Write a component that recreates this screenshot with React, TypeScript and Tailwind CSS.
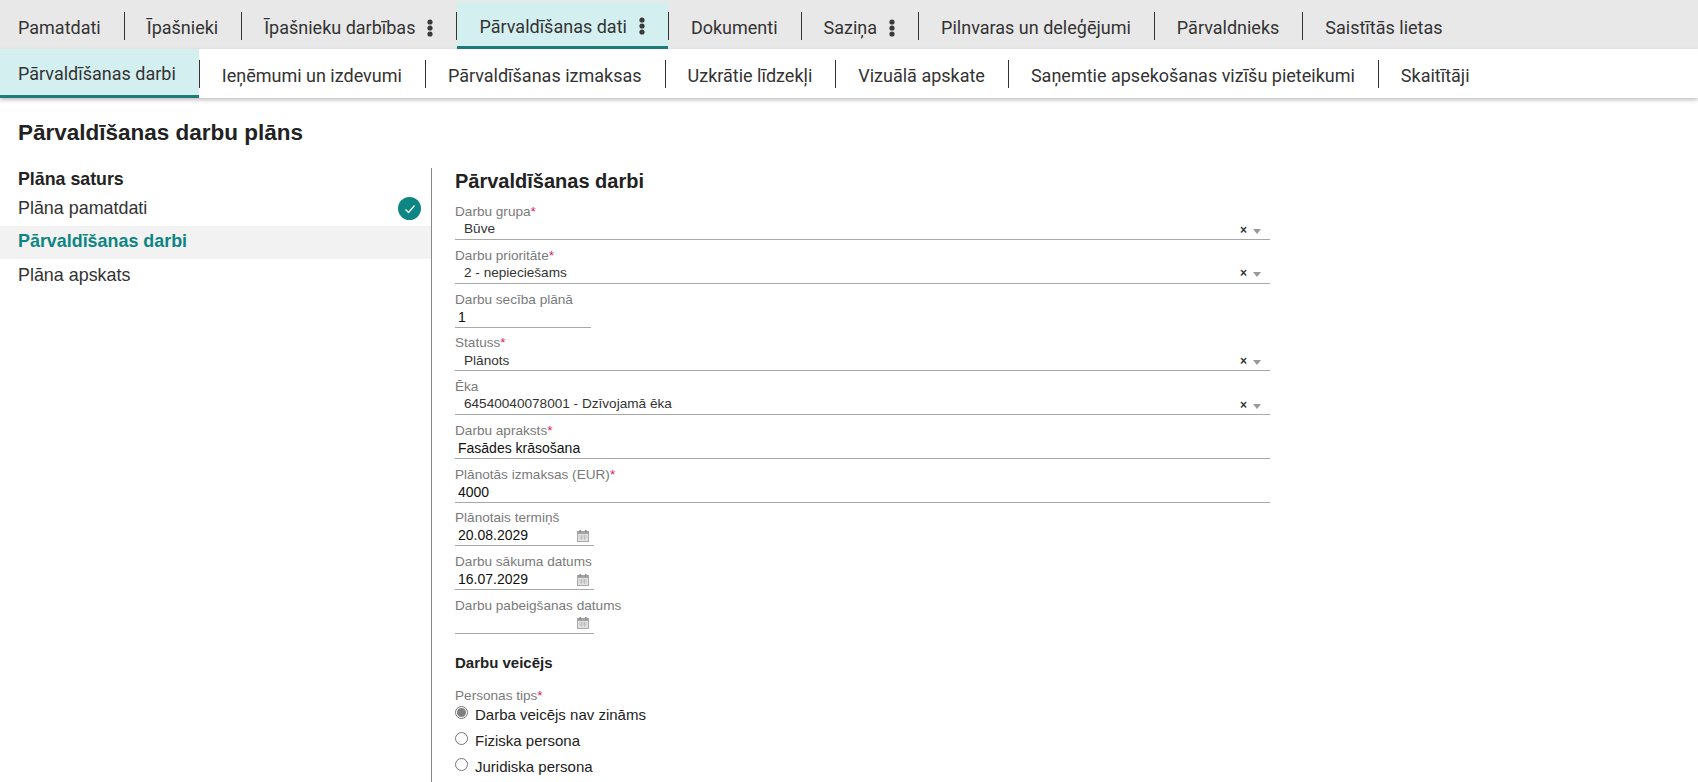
import React from "react";

const topTabs = [
  { label: "Pamatdati" },
  { label: "Īpašnieki" },
  { label: "Īpašnieku darbības", menu: true },
  { label: "Pārvaldīšanas dati", menu: true, active: true },
  { label: "Dokumenti" },
  { label: "Saziņa", menu: true },
  { label: "Pilnvaras un deleģējumi" },
  { label: "Pārvaldnieks" },
  { label: "Saistītās lietas" },
];

const subTabs = [
  { label: "Pārvaldīšanas darbi", active: true },
  { label: "Ieņēmumi un izdevumi" },
  { label: "Pārvaldīšanas izmaksas" },
  { label: "Uzkrātie līdzekļi" },
  { label: "Vizuālā apskate" },
  { label: "Saņemtie apsekošanas vizīšu pieteikumi" },
  { label: "Skaitītāji" },
];

function Kebab() {
  return (
    <svg width="6" height="18" viewBox="0 0 6 18" className="ml-[12px] shrink-0">
      <circle cx="3" cy="3" r="2.6" fill="#3a3a3a" />
      <circle cx="3" cy="9" r="2.6" fill="#3a3a3a" />
      <circle cx="3" cy="15" r="2.6" fill="#3a3a3a" />
    </svg>
  );
}

function CalendarIcon() {
  return (
    <svg width="12" height="12" viewBox="0 0 12 12" className="shrink-0">
      <rect x="0.5" y="1.5" width="11" height="10" fill="#e2e2e2" stroke="#aaa" />
      <rect x="0" y="1" width="12" height="3" fill="#a5a5a5" />
      <rect x="2.5" y="0" width="1.5" height="2.5" fill="#888" />
      <rect x="8" y="0" width="1.5" height="2.5" fill="#888" />
      <path d="M2 6h8M2 8h8M4.5 5v5M7.5 5v5" stroke="#b5b5b5" strokeWidth="0.7" />
    </svg>
  );
}

function TabRow({ items, top }: { items: { label: string; menu?: boolean; active?: boolean }[]; top?: boolean }) {
  return (
    <>
      {items.map((t, i) => (
        <React.Fragment key={t.label}>
          {i > 0 && <div className="my-auto h-[28px] w-px shrink-0 bg-[#333]" />}
          <div
            className={`flex h-full shrink-0 items-center pr-[23px] ${top ? "pt-[4px]" : "pt-[3px]"} ${
              t.active ? "border-b-[3px] border-[#1f7d78] bg-[#d3eff0]" : ""
            } ${i === 0 ? "pl-[18px]" : "pl-[22px]"}`}
          >
            {t.label}
            {t.menu && <Kebab />}
          </div>
        </React.Fragment>
      ))}
    </>
  );
}

function Label({ text, required }: { text: string; required?: boolean }) {
  return (
    <div className="h-[16px] whitespace-nowrap text-[13.6px] leading-[16px] text-[#7a7a7a]">
      {text}
      {required && <span className="text-[#d81b60]">*</span>}
    </div>
  );
}

function SelectField({ label, value, required }: { label: string; value: string; required?: boolean }) {
  return (
    <div className="h-[43.75px] w-[815px] pt-[6px]">
      <Label text={label} required={required} />
      <div className="flex h-[20px] items-center border-b border-[#a8a8a8] pl-[9px] pr-[9px] text-[13.6px] text-[#333]">
        <span className="flex-1">{value}</span>
        <span className="mr-[6px] text-[12px] font-bold leading-none text-[#333]">×</span>
        <span className="mt-[3px] h-0 w-0 border-x-[4px] border-t-[5px] border-x-transparent border-t-[#999]" />
      </div>
    </div>
  );
}

function TextField({ label, value, required, width }: { label: string; value: string; required?: boolean; width: string }) {
  return (
    <div className={`h-[43.75px] pt-[6px] ${width}`}>
      <Label text={label} required={required} />
      <div className="flex h-[20px] items-center border-b border-[#a8a8a8] pl-[3px] text-[14px] text-[#111]">{value}</div>
    </div>
  );
}

function DateField({ label, value }: { label: string; value: string }) {
  return (
    <div className="h-[43.75px] w-[139px] pt-[6px]">
      <Label text={label} />
      <div className="flex h-[20px] items-center justify-between border-b border-[#a8a8a8] pl-[3px] pr-[5px] text-[14px] text-[#111]">
        <span>{value}</span>
        <CalendarIcon />
      </div>
    </div>
  );
}

function Radio({ label, checked }: { label: string; checked?: boolean }) {
  return (
    <div className="flex h-[26px] items-start text-[15px] text-[#222]">
      <span className="mt-[2px] flex h-[13px] w-[13px] shrink-0 items-center justify-center rounded-full border border-[#767676] bg-white">
        {checked && <span className="h-[9px] w-[9px] rounded-full bg-[#808080]" />}
      </span>
      <span className="ml-[7px] mt-[3px] leading-[16px]">{label}</span>
    </div>
  );
}

export default function App() {
  return (
    <div className="flex h-screen flex-col overflow-hidden bg-white font-['Liberation_Sans',Arial,sans-serif]">
      <div className="flex h-[49px] shrink-0 bg-[#e8e8e8] pt-[2px] font-['Roboto',sans-serif] text-[18px] text-[#333]">
        <TabRow items={topTabs} top />
      </div>
      <div className="flex h-[49px] shrink-0 bg-white font-['Roboto',sans-serif] text-[18px] text-[#333] shadow-[0_2px_4px_rgba(0,0,0,0.25)]">
        <TabRow items={subTabs} />
      </div>
      <h1 className="mt-[22px] pl-[18px] text-[22.5px] font-bold leading-[26px] text-[#222]">Pārvaldīšanas darbu plāns</h1>
      <div className="mt-[22px] flex min-h-0 flex-1">
        <div className="w-[432px] shrink-0 border-r border-[#888] pt-px">
          <div className="pl-[18px] text-[17.8px] font-bold leading-[20px] text-[#222]">Plāna saturs</div>
          <div className="flex h-[37px] items-center justify-between pl-[18px] pr-[10px] pt-[2px] text-[17.9px] text-[#333]">
            Plāna pamatdati
            <span className="flex h-[23px] w-[23px] items-center justify-center rounded-full bg-[#0d8583]">
              <svg width="12" height="12" viewBox="0 0 12 12" fill="none" stroke="white" strokeWidth="1.3">
                <path d="M1.5 6.5 4.6 9.5 10.5 2.5" />
              </svg>
            </span>
          </div>
          <div className="flex h-[33px] items-center bg-[#f2f2f2] pb-[2px] pl-[18px] text-[17.9px] font-bold text-[#0d8583]">Pārvaldīšanas darbi</div>
          <div className="flex h-[33px] items-center pl-[18px] text-[17.9px] text-[#333]">Plāna apskats</div>
        </div>
        <div className="pl-[23px]">
          <h2 className="pb-[5px] pt-[1px] text-[20px] font-bold leading-[24px] text-[#222]">Pārvaldīšanas darbi</h2>
          <SelectField label="Darbu grupa" value="Būve" required />
          <SelectField label="Darbu prioritāte" value="2 - nepieciešams" required />
          <TextField label="Darbu secība plānā" value="1" width="w-[136px]" />
          <SelectField label="Statuss" value="Plānots" required />
          <SelectField label="Ēka" value="64540040078001 - Dzīvojamā ēka" />
          <TextField label="Darbu apraksts" value="Fasādes krāsošana" required width="w-[815px]" />
          <TextField label="Plānotās izmaksas (EUR)" value="4000" required width="w-[815px]" />
          <DateField label="Plānotais termiņš" value="20.08.2029" />
          <DateField label="Darbu sākuma datums" value="16.07.2029" />
          <DateField label="Darbu pabeigšanas datums" value="" />
          <div className="mt-[18px] text-[15px] font-bold leading-[18px] text-[#222]">Darbu veicējs</div>
          <div className="mt-[16px]">
            <Label text="Personas tips" required />
            <Radio label="Darba veicējs nav zināms" checked />
            <Radio label="Fiziska persona" />
            <Radio label="Juridiska persona" />
          </div>
        </div>
      </div>
    </div>
  );
}
